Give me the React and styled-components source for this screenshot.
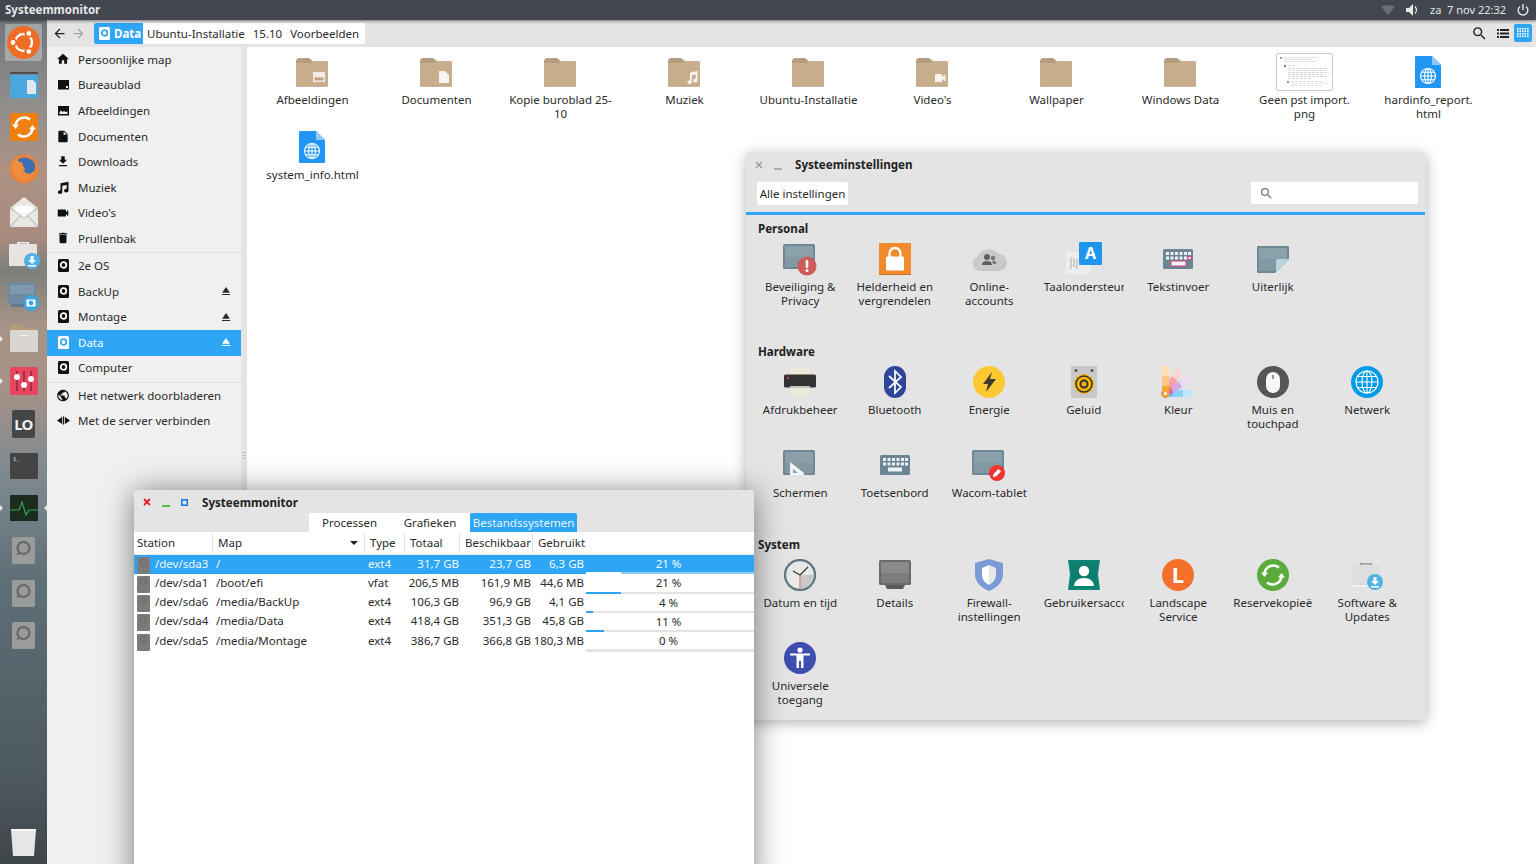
import React from "react";
import styled, { createGlobalStyle } from "styled-components";
import {
  MdHome,
  MdInsertDriveFile,
  MdFileDownload,
  MdVideocam,
  MdDelete,
  MdEject,
  MdPublic,
  MdArrowBack,
  MdArrowForward,
  MdSearch,
} from "react-icons/md";

const GlobalStyle = createGlobalStyle`
  html, body {
    margin: 0;
    padding: 0;
    height: 100%;
    overflow: hidden;
    background: #fff;
  }
  body {
    font-family: "Noto Sans", "Open Sans", sans-serif;
    font-size: 11.5px;
    color: #2a2a2a;
  }
  svg { display: block; }
`;

const Screen = styled.div`
  position: relative;
  width: 1536px;
  height: 864px;
  overflow: hidden;
  display: flex;
  flex-direction: column;
`;

/* top panel */
const TopBar = styled.header`
  height: 20px;
  flex: none;
  box-sizing: border-box;
  background: #41464f;
  color: #e6e6e6;
  display: flex;
  align-items: center;
  padding: 0 5px 1px;
  position: relative;
  z-index: 3;
  box-shadow: 0 1px 3px rgba(0, 0, 0, 0.5);
`;
const AppName = styled.div`
  font-weight: 700;
  font-size: 11.5px;
  flex: 1;
`;
const Tray = styled.div`
  display: flex;
  align-items: center;
`;
const VolumeIcon = styled.svg`
  margin-left: 11px;
`;
const Clock = styled.span`
  font-size: 11px;
  margin: 0 11px 0 10px;
  white-space: pre;
`;
const TrayEnd = styled.span`
  width: 2px;
`;

const Main = styled.div`
  flex: 1;
  display: flex;
  min-height: 0;
`;

/* launcher */
const Launcher = styled.nav`
  width: 47px;
  flex: none;
  padding-top: 1px;
  display: flex;
  flex-direction: column;
  align-items: center;
  background: linear-gradient(
    180deg,
    #72777b 0,
    #8e8d8c 80px,
    #ad9283 150px,
    #a88c80 215px,
    #7e7f7a 250px,
    #a69486 305px,
    #a49287 370px,
    #7f8a90 450px,
    #5f6f78 560px,
    #4c585e 760px,
    #3f4649 844px
  );
`;
const LaunchItem = styled.div`
  position: relative;
  width: 47px;
  height: 42.4px;
  flex: none;
  display: flex;
  align-items: center;
  justify-content: center;
  margin-top: ${(p) => (p.$bottom ? "auto" : "0")};
`;
const LaunchTile = styled.div`
  width: 37px;
  height: 37px;
  display: flex;
  align-items: center;
  justify-content: center;
  border-radius: 2px;
  background: ${(p) => (p.$active ? "rgba(255,255,255,.32)" : "transparent")};
`;
const Pip = styled.i`
  position: absolute;
  top: 18px;
  ${(p) => (p.$right ? "right: 0;" : "left: 0;")}
  width: 0;
  height: 0;
  border-top: 3px solid transparent;
  border-bottom: 3px solid transparent;
  ${(p) =>
    p.$right
      ? "border-right: 3px solid #e8e8e8;"
      : "border-left: 3px solid #e8e8e8;"}
`;

/* file manager */
const Files = styled.div`
  flex: 1;
  display: flex;
  flex-direction: column;
  min-width: 0;
`;
const Toolbar = styled.div`
  height: 27px;
  flex: none;
  box-sizing: border-box;
  background: #e4e4e4;
  display: flex;
  align-items: center;
  padding: 0 4px 1px 3px;
`;
const NavButton = styled.div`
  width: 19px;
  height: 20px;
  display: flex;
  align-items: center;
  justify-content: center;
  color: ${(p) => (p.$off ? "#a5a5a5" : "#222")};
`;
const Crumbs = styled.div`
  margin-left: 6px;
  height: 21px;
  display: flex;
  align-items: center;
  background: #fff;
  border-radius: 2px;
  overflow: hidden;
  padding-right: 2px;
`;
const CrumbActive = styled.div`
  --hole: #2ea5f5;
  height: 100%;
  width: 49px;
  box-sizing: border-box;
  padding-left: 5px;
  display: flex;
  align-items: center;
  gap: 4px;
  background: #2ea5f5;
  color: #fff;
  font-weight: 700;
`;
const Crumb = styled.span`
  padding: 0 4px;
`;
const ToolSpacer = styled.div`
  flex: 1;
`;
const ViewButton = styled.div`
  width: 18px;
  height: 18px;
  display: flex;
  align-items: center;
  justify-content: center;
  border-radius: 2px;
  background: ${(p) => (p.$active ? "#2ea5f5" : "transparent")};
  color: #222;
  margin-left: ${(p) => p.$gap || 0}px;
`;
const FilesBody = styled.div`
  flex: 1;
  display: flex;
  min-height: 0;
`;
const Sidebar = styled.aside`
  width: 194px;
  flex: none;
  background: #f0f0f0;
`;
const SideGroup = styled.div`
  & + & {
    border-top: 1px solid #e2e2e2;
    margin-top: 0.5px;
  }
`;
const SideRow = styled.div`
  --hole: ${(p) => (p.$active ? "#2ea5f5" : "#fff")};
  height: 25.6px;
  box-sizing: border-box;
  display: flex;
  align-items: center;
  padding: 0 8px 1px 9px;
  background: ${(p) => (p.$active ? "#2ea5f5" : "transparent")};
  color: ${(p) => (p.$active ? "#fff" : "#2a2a2a")};
`;
const SideIcon = styled.span`
  width: 14px;
  height: 14px;
  margin-right: 8px;
  display: flex;
  align-items: center;
  justify-content: center;
  color: ${(p) => (p.$active ? "#fff" : "#111")};
`;
const SideLabel = styled.span`
  flex: 1;
`;
const PaneHandle = styled.div`
  width: 6px;
  flex: none;
  background: #e4e4e4;
  display: flex;
  justify-content: center;
`;
const Grip = styled.div`
  width: 4px;
  height: 8px;
  margin-top: 405px;
  background: repeating-linear-gradient(
    180deg,
    #c4c4c4 0,
    #c4c4c4 1px,
    transparent 1px,
    transparent 3px
  );
`;
const FileGrid = styled.main`
  flex: 1;
  background: #fff;
  padding: 7px 0 0 3px;
  display: grid;
  grid-template-columns: repeat(10, 124px);
  grid-auto-rows: 75px;
  align-content: start;
`;
const FileItem = styled.div`
  display: flex;
  flex-direction: column;
  align-items: center;
`;
const FileIconBox = styled.div`
  height: 36px;
  display: flex;
  align-items: center;
  justify-content: center;
  margin-bottom: 3px;
`;
const FileLabel = styled.div`
  width: 106px;
  text-align: center;
  line-height: 14px;
  transform: translateX(0.5px);
`;

/* floating windows */
const Window = styled.section`
  position: absolute;
  display: flex;
  flex-direction: column;
  border-radius: 4px 4px 0 0;
`;
const MonitorWindow = styled(Window)`
  left: 134px;
  top: 490px;
  width: 620px;
  height: 400px;
  background: #fff;
  z-index: 2;
  box-shadow: 0 2px 30px rgba(0, 0, 0, 0.5);
`;
const SettingsWindow = styled(Window)`
  left: 746px;
  top: 152px;
  width: 680px;
  height: 568px;
  background: #e4e4e4;
  z-index: 1;
  box-shadow: 0 3px 14px rgba(0, 0, 0, 0.3);
`;
const TitleBar = styled.div`
  height: ${(p) => p.$h}px;
  flex: none;
  box-sizing: border-box;
  padding-top: ${(p) => p.$top || 0}px;
  display: flex;
  align-items: center;
  background: #e4e4e4;
  border-radius: 4px 4px 0 0;
`;
const WinButtons = styled.div`
  display: flex;
  margin-left: 3px;
`;
const WinButton = styled.span`
  width: 19px;
  height: 10px;
  flex: none;
  display: flex;
  justify-content: center;
  align-items: ${(p) => (p.$low ? "flex-end" : "center")};
`;
const WinTitle = styled.div`
  font-weight: 700;
  font-size: 11.6px;
  color: #222;
  margin-left: ${(p) => p.$gap}px;
`;
const TabRow = styled.div`
  height: 19px;
  flex: none;
  background: #e4e4e4;
  padding-left: 175px;
  display: grid;
  grid-template-columns: 81px 80px 107px;
  justify-content: start;
`;
const Tab = styled.div`
  display: flex;
  align-items: center;
  justify-content: center;
  background: ${(p) => (p.$active ? "#2ea5f5" : "#fff")};
  color: ${(p) => (p.$active ? "#e8f4fd" : "#2a2a2a")};
  border-radius: ${(p) => (p.$active ? "2px 2px 0 0" : "0")};
`;

const columns = "79px 152px 40px 55px 73px 52px 169px";
const TableHead = styled.div`
  display: grid;
  grid-template-columns: ${columns};
  height: 22px;
  flex: none;
  align-items: center;
  border-bottom: 1px solid #e8e8e8;
`;
const HeadCell = styled.div`
  height: 18px;
  display: flex;
  align-items: center;
  justify-content: space-between;
  padding: 0 7px 1px 5px;
  box-sizing: border-box;
  box-shadow: ${(p) => (p.$last ? "none" : "inset -1px 0 0 #e0e0e0")};
  white-space: nowrap;
  &:first-child {
    padding-left: 3px;
  }
`;
const SortArrow = styled.i`
  width: 0;
  height: 0;
  border-left: 4px solid transparent;
  border-right: 4px solid transparent;
  border-top: 4px solid #222;
`;
const TableRow = styled.div`
  display: grid;
  grid-template-columns: ${columns};
  height: 19.25px;
  background: ${(p) => (p.$selected ? "#2ea5f5" : "#fff")};
  color: ${(p) => (p.$selected ? "#f2f9fe" : "#2a2a2a")};
`;
const Cell = styled.div`
  display: flex;
  align-items: center;
  justify-content: ${(p) => (p.$right ? "flex-end" : "flex-start")};
  padding: ${(p) => p.$pad || "0 1px 3px 0"};
  white-space: nowrap;
`;
const DeviceCell = styled.div`
  display: flex;
  align-items: center;
  white-space: nowrap;
`;
const DeviceName = styled.span`
  margin-bottom: 3px;
`;
const DriveBadge = styled.span`
  width: 13px;
  height: 17px;
  flex: none;
  margin: 1px 5px 0 3px;
  background: #7b7b7b;
  border-radius: 1px;
  display: flex;
  justify-content: center;
  padding-top: 2px;
  box-sizing: border-box;
`;
const DriveHole = styled.i`
  width: 7px;
  height: 7px;
  border-radius: 50%;
  border: 1px solid #666;
  box-sizing: border-box;
`;
const UsageCell = styled.div`
  padding: 0 0 0 1px;
  display: flex;
  flex-direction: column;
`;
const UsageText = styled.div`
  flex: 1;
  display: flex;
  align-items: center;
  justify-content: center;
  padding-right: 3px;
`;
const UsageTrack = styled.div`
  height: 3px;
  margin-bottom: -1px;
  background: ${(p) => (p.$selected ? "#8dcbf8" : "#e4e4e4")};
`;
const UsageFill = styled.div`
  height: 100%;
  background: ${(p) => (p.$selected ? "#fff" : "#2ea5f5")};
`;

/* settings */
const SetToolbar = styled.div`
  height: 35px;
  flex: none;
  display: flex;
  justify-content: space-between;
  padding: 5px 8px 0 11px;
  box-sizing: border-box;
`;
const AllButton = styled.div`
  width: 91px;
  height: 23px;
  box-sizing: border-box;
  padding-bottom: 1px;
  background: #fff;
  border-radius: 2px;
  display: flex;
  align-items: center;
  justify-content: center;
`;
const SearchBox = styled.div`
  width: 167px;
  height: 22px;
  background: #fff;
  color: #777;
  display: flex;
  align-items: center;
  padding-left: 8px;
  box-sizing: border-box;
`;
const BlueLine = styled.div`
  height: 3px;
  width: 679px;
  flex: none;
  background: #2ea5f5;
`;
const SetContent = styled.div`
  padding: 7px 0 0 7px;
`;
const SetSection = styled.div`
  margin: ${(p) => p.$gap}px 10px 0 0;
  padding-top: ${(p) => (p.$first ? 0 : 7)}px;
  border-top: ${(p) => (p.$first ? "none" : "1px solid #dedede")};
`;
const SetHeading = styled.div`
  font-weight: 700;
  font-size: 11.6px;
  line-height: 14px;
  margin: 0 0 7px 5px;
  color: #222;
`;
const SetGrid = styled.div`
  display: grid;
  grid-template-columns: repeat(7, 94.5px);
  grid-auto-rows: 83px;
`;
const SetItem = styled.div`
  display: flex;
  flex-direction: column;
  align-items: center;
`;
const SetIcon = styled.div`
  height: 32px;
  display: flex;
  align-items: center;
  justify-content: center;
`;
const SetLabel = styled.div`
  width: 80px;
  margin-top: 5px;
  line-height: 14px;
  text-align: center;
  overflow-x: clip;
`;

/* ---- small icons ---- */
const Globe = ({ cx, cy, r }) => (
  <g fill="none" stroke="#fff" strokeWidth="1.1">
    <circle cx={cx} cy={cy} r={r} />
    <ellipse cx={cx} cy={cy} rx={r * 0.45} ry={r} />
    <path d={`M${cx} ${cy - r}V${cy + r}M${cx - r} ${cy}H${cx + r}`} />
    <path
      d={`M${cx - r * 0.86} ${cy - r * 0.5}H${cx + r * 0.86}M${cx - r * 0.86} ${cy + r * 0.5}H${cx + r * 0.86}`}
    />
  </g>
);

const Folder = ({ kind }) => (
  <svg width="32" height="30" viewBox="0 0 32 30">
    <path d="M1 2.500Q1 1 2.500 1H13L17 4H30.500Q32 4 32 5.500V8H0V3Z" fill="#b39c7f" />
    <path d="M0 6H15L17 4H30.500Q32 4 32 5.500V28Q32 29.500 30.500 29.500H1.500Q0 29.500 0 28Z" fill="#c9ae8c" />
    <rect y="28.500" width="32" height="1" fill="#b39c7f" />
    {kind === "img" && (
      <g>
        <rect x="17" y="15" width="12" height="10" fill="#f2ede6" />
        <path d="M18.500 23.500V21L20 19.500L21.500 21L23 20L24.500 21L25.500 20L27.500 21V23.500Z" fill="#bda488" />
      </g>
    )}
    {kind === "doc" && <path d="M19 14H25L29 18V26H19Z" fill="#f7f3ee" />}
    {kind === "music" && (
      <path
        d="M22 15.500L29.500 14V23.500A2.200 1.900 0 1 1 27.800 21.700V17.500L23.800 18.300V25A2.200 1.900 0 1 1 22 23.200Z"
        fill="#f7f3ee"
      />
    )}
    {kind === "video" && (
      <path d="M19 17H26V20L29.500 17.500V24.500L26 22V25H19Z" fill="#f7f3ee" />
    )}
  </svg>
);

const HtmlFile = () => (
  <svg width="26" height="32" viewBox="0 0 26 32">
    <path d="M1 0H17L26 9V31Q26 32 25 32H1Q0 32 0 31V1Q0 0 1 0Z" fill="#2196f3" />
    <path d="M17 0L26 9H17Z" fill="#90caf9" />
    <Globe cx={13} cy={20} r={7.5} />
  </svg>
);

const Thumb = () => (
  <svg width="57" height="38" viewBox="0 0 57 38">
    <rect x="0.500" y="0.500" width="56" height="37" rx="1" fill="#fff" stroke="#c9c9c9" />
    <rect x="4" y="4" width="2" height="2" fill="#8f9db0" />
    <path d="M8 4.500H42M8 6.500H36M8 8.500H40" stroke="#e2e2e2" />
    <rect x="8" y="12" width="2" height="2" fill="#5f84b8" />
    <path d="M12 12.500H20M12 15.500H52M12 17.500H50M12 19.500H53M12 21.500H49M12 23.500H51M12 25.500H36" stroke="#d8d8d8" strokeDasharray="3 1" />
    <rect x="11" y="28" width="2" height="2" fill="#7a9fca" />
    <path d="M15 28.500H48M15 30.500H52M15 32.500H46" stroke="#e0e0e0" strokeDasharray="3 1" />
  </svg>
);

const DriveIcon = () => (
  <svg width="11" height="13" viewBox="0 0 11 13">
    <rect width="11" height="13" rx="1.500" fill="currentColor" />
    <circle cx="5.500" cy="6" r="2.800" fill="none" stroke="var(--hole, #fff)" strokeWidth="1.800" />
  </svg>
);

const BlockIcon = ({ kind }) => (
  <svg width="13" height="13" viewBox="0 0 13 13" fill="currentColor">
    {kind === "desk" && (
      <g>
        <path d="M1 2H12V11.500H1Z" />
        <rect x="9" y="8" width="2" height="2" fill="#f0f0f0" />
      </g>
    )}
    {kind === "pics" && (
      <g>
        <path d="M1 2H12V11.500H1Z" />
        <path d="M2.500 10V8L4 6.500L5.500 8L7 7L8.500 8L10.500 7.500V10Z" fill="#f0f0f0" />
      </g>
    )}
    {kind === "music" && (
      <path d="M3.500 2.200L11.500 0.800V9.500A2.200 1.900 0 1 1 9.700 7.700V4L5.300 4.800V11A2.200 1.900 0 1 1 3.500 9.200Z" />
    )}
    {kind === "server" && (
      <path d="M0 6.500L5 3V10ZM5.800 2.500H7.200V10.500H5.800ZM8 3L13 6.500L8 10Z" />
    )}
  </svg>
);

/* ---- launcher icons ---- */
const UbuntuLogo = ({ size = 33 }) => (
  <svg width={size} height={size} viewBox="0 0 33 33">
    <circle cx="16.500" cy="16.500" r="16.500" fill="#ef6c24" />
    <circle cx="16.500" cy="16.500" r="8.500" fill="none" stroke="#fff" strokeWidth="2.400" />
    <g stroke="#ef6c24" strokeWidth="2">
      <circle cx="6" cy="16.500" r="3.400" fill="#fff" />
      <circle cx="21.800" cy="7.400" r="3.400" fill="#fff" />
      <circle cx="21.800" cy="25.600" r="3.400" fill="#fff" />
    </g>
  </svg>
);
const SyncArrows = ({ x = 0, y = 0, color = "#fff" }) => (
  <g transform={`translate(${x} ${y})`} fill="none" stroke={color} strokeWidth="2.600">
    <path d="M5.500 12A9 9 0 0 1 20 6.500" />
    <path d="M22.500 16A9 9 0 0 1 8 21.500" />
    <path d="M2 11.500H9L5.500 16Z" fill={color} stroke="none" />
    <path d="M26 16.500H19L22.500 12Z" fill={color} stroke="none" />
  </g>
);
const FilesApp = () => (
  <svg width="28" height="26" viewBox="0 0 28 26">
    <rect width="28" height="2" y="0" fill="#4a4f57" />
    <rect y="3" width="28" height="23" rx="1" fill="#4aa8de" />
    <path d="M17 8H23L26 11V22H17Z" fill="#dfe8ee" />
  </svg>
);
const UpdatesApp = () => (
  <svg width="28" height="28" viewBox="0 0 28 28">
    <rect width="28" height="28" rx="1" fill="#f07f12" />
    <SyncArrows />
  </svg>
);
const Firefox = () => (
  <svg width="30" height="30" viewBox="0 0 30 30">
    <circle cx="15" cy="15" r="14.500" fill="#e9833a" />
    <path d="M8 6Q15 1 23 6Q28 11 25 17Q22 21 18 19Q14 18 16 14Q13 12 14 9Q11 9 8 6Z" fill="#3b6fb5" />
    <path d="M3 13Q4 6 9 3Q7 8 12 9Q12 12 15 13Q12 15 14 19Q19 23 25 17Q23 25 15 26Q5 25 3 13Z" fill="#ee8f3c" />
  </svg>
);
const MailApp = () => (
  <svg width="28" height="30" viewBox="0 0 28 30">
    <path d="M0 11L14 0L28 11V30H0Z" fill="#e9e7e4" />
    <path d="M5 9H23V16L14 21L5 16Z" fill="#fff" />
    <path d="M0 11L14 21L28 11M0 30L11 18M28 30L17 18" stroke="#a9a9a9" fill="none" />
  </svg>
);
const SoftwareApp = ({ dim }) => (
  <svg width="32" height="30" viewBox="0 0 32 30">
    <path d="M9 3H21V6H19V4.500H11V6H9Z" fill={dim ? "#9a9a9a" : "#eee"} />
    <rect x="1" y="5" width="28" height="22" rx="1" fill={dim ? "#dedede" : "#e6e3e0"} />
    {dim && <rect x="1" y="25" width="28" height="2" fill="#f0f0f0" />}
    <circle cx="24" cy="22" r="8" fill="#4fb1e4" />
    <path d="M22.500 17H25.500V21H28L24 25L20 21H22.500ZM20 26H28V27.500H20Z" fill="#fff" />
  </svg>
);
const ShotApp = () => (
  <svg width="32" height="30" viewBox="0 0 32 30">
    <rect x="0" y="0" width="28" height="22" rx="1" fill="#6d8aa0" />
    <rect x="2" y="3" width="24" height="9" fill="#7f9aae" />
    <rect x="3" y="22" width="22" height="3" fill="#5f7a8e" />
    <circle cx="23" cy="21" r="8" fill="#3ea6dc" />
    <rect x="18.500" y="17.500" width="9" height="7" fill="#fff" />
    <circle cx="23" cy="21" r="2.400" fill="#3ea6dc" />
  </svg>
);
const FolderApp = () => (
  <svg width="28" height="27" viewBox="0 0 28 27">
    <path d="M1 0H12L15 3H25V8H1Z" fill="#b49c7a" />
    <rect y="5" width="28" height="22" rx="1" fill="#d9d6d1" />
    <rect x="10" y="10" width="8" height="1" fill="#f5f5f5" />
  </svg>
);
const MixerApp = () => (
  <svg width="28" height="28" viewBox="0 0 28 28">
    <rect width="28" height="28" rx="2" fill="#e8455e" />
    <path d="M7 4V24M14 4V24M21 4V24" stroke="#a82c44" strokeWidth="2" />
    <circle cx="7" cy="10" r="3" fill="#fff" />
    <circle cx="14" cy="18" r="3" fill="#fff" />
    <circle cx="21" cy="12" r="3" fill="#fff" />
  </svg>
);
const OfficeTile = styled.div`
  width: 23px;
  height: 28px;
  background: #454545;
  border-radius: 2px;
  color: #f0f0f0;
  font: 700 15px "Noto Sans", sans-serif;
  display: flex;
  align-items: center;
  justify-content: center;
  letter-spacing: -0.8px;
`;
const TerminalApp = () => (
  <svg width="28" height="26" viewBox="0 0 28 26">
    <rect width="28" height="26" rx="1" fill="#444" />
    <text x="3" y="8" fontSize="6" fill="#bbb" fontFamily="Noto Sans, sans-serif">$_</text>
  </svg>
);
const MonitorApp = () => (
  <svg width="28" height="26" viewBox="0 0 28 26">
    <rect width="28" height="26" rx="1" fill="#1b2b1d" />
    <path d="M0 15H9L12 7L16 20L19 15H28" fill="none" stroke="#37a24a" strokeWidth="1.200" />
  </svg>
);
const DiskApp = () => (
  <svg width="23" height="27" viewBox="0 0 23 27">
    <rect width="23" height="27" rx="2" fill="#9a9c9c" />
    <circle cx="11.500" cy="11" r="6" fill="none" stroke="#686b6c" strokeWidth="2.400" />
    <path d="M6 15L4 18L9 17Z" fill="#686b6c" />
  </svg>
);
const TrashApp = () => (
  <svg width="26" height="29" viewBox="0 0 26 29">
    <path d="M0 1H25L23 28H2Z" fill="#e6e6e4" />
    <path d="M0 1H25L24.800 3H0.200Z" fill="#f8f8f8" />
  </svg>
);

/* ---- settings icons ---- */
const Tablet = ({ children, fill = "#6f8894", inner = "#8aa0aa" }) => (
  <svg width="36" height="34" viewBox="0 0 36 34">
    <rect x="1" y="2" width="32" height="25" rx="1.500" fill={fill} />
    <rect x="3" y="4" width="28" height="21" fill={inner} />
    <rect x="3" y="15" width="28" height="10" fill={fill} opacity="0.28" />
    {children}
  </svg>
);
const Keyboard = ({ pink }) => (
  <svg width="30" height="22" viewBox="0 0 30 22">
    <rect width="30" height="20" y="1" rx="1.500" fill="#6b8593" />
    <g fill="#eef2f4">
      {[3, 7.5, 12, 16.5, 21, 25].map((x) => (
        <React.Fragment key={x}>
          <rect x={x} y="4" width="3" height="3" />
          <rect x={x} y="8.500" width="3" height="3" />
        </React.Fragment>
      ))}
      {pink ? (
        <rect x="8" y="13" width="15" height="5" stroke="#d9447f" strokeWidth="1" />
      ) : (
        <rect x="8" y="13.500" width="14" height="4" />
      )}
    </g>
    {pink && <rect x="25" y="8.500" width="3" height="3" fill="#fff" stroke="#d9447f" />}
  </svg>
);
const Round = ({ fill, children }) => (
  <svg width="32" height="32" viewBox="0 0 32 32">
    <circle cx="16" cy="16" r="16" fill={fill} />
    {children}
  </svg>
);
const FanStrip = ({ rot, shades }) => (
  <g transform={`rotate(${rot} 4.500 27.500)`}>
    <rect x="1" y="0" width="7" height="10" fill={shades[2]} />
    <rect x="1" y="10" width="7" height="10" fill={shades[1]} />
    <rect x="1" y="20" width="7" height="11" rx="1" fill={shades[0]} />
  </g>
);

const settingIcons = {
  security: (
    <Tablet>
      <circle cx="25" cy="24" r="9.500" fill="#cd5c58" />
      <rect x="23.700" y="18" width="2.600" height="8" rx="1" fill="#fff" />
      <circle cx="25" cy="28.500" r="1.500" fill="#fff" />
    </Tablet>
  ),
  lock: (
    <svg width="32" height="32" viewBox="0 0 32 32">
      <rect width="32" height="32" fill="#ef8b2c" />
      <rect y="31" width="32" height="1" fill="#c96f1e" />
      <path d="M10.500 14V10.500A5.500 5.500 0 0 1 21.500 10.500V14" fill="none" stroke="#fff" strokeWidth="2.400" />
      <rect x="7" y="13.500" width="18" height="14" rx="1" fill="#fff" />
    </svg>
  ),
  online: (
    <svg width="36" height="26" viewBox="0 0 36 26">
      <path d="M8 25A7.500 7.500 0 0 1 7 10.500A11 10 0 0 1 27 8A8.500 8.500 0 0 1 28 25Z" fill="#c9c9c9" />
      <circle cx="16" cy="11" r="3" fill="#5f5f5f" />
      <path d="M11 19Q11 15 16 15Q21 15 21 19Z" fill="#5f5f5f" />
      <circle cx="22" cy="12" r="2.200" fill="#777" />
      <path d="M21 15Q25 14 25.500 18H22Z" fill="#777" />
    </svg>
  ),
  language: (
    <svg width="36" height="34" viewBox="0 0 36 34">
      <rect x="0" y="10" width="24" height="22" fill="#eeeeee" />
      <path d="M5 15V27M8 16V25M11 17V27" stroke="#c2c2c2" strokeWidth="1.500" />
      <rect x="13" y="0" width="23" height="23" rx="1" fill="#1e96f0" />
      <text x="24.500" y="17" textAnchor="middle" fontSize="16" fontWeight="700" fill="#fff" fontFamily="Noto Sans, sans-serif">A</text>
    </svg>
  ),
  input: <Keyboard pink />,
  look: (
    <svg width="32" height="27" viewBox="0 0 32 27">
      <path d="M1 0H31Q32 0 32 1V13L18 27H1Q0 27 0 26V1Q0 0 1 0Z" fill="#6f8894" />
      <path d="M2 2H30V12.500L17.500 25H2Z" fill="#8aa0aa" />
      <path d="M2 13H30L17.500 25H2Z" fill="#6f8894" opacity="0.3" />
      <path d="M32 13L19 26V15Q19 13 21 13Z" fill="#b5d3e0" />
    </svg>
  ),
  printer: (
    <svg width="32" height="32" viewBox="0 0 32 32">
      <rect x="6" y="1" width="20" height="10" fill="#eeeadb" />
      <rect y="8.500" width="32" height="13" rx="1.500" fill="#333" />
      <rect x="3" y="11" width="2" height="2" fill="#d33" />
      <rect x="6" y="20" width="20" height="11" fill="#eeeadb" />
      <rect x="6" y="20" width="20" height="2" fill="#c9c6ba" />
    </svg>
  ),
  bluetooth: (
    <svg width="22" height="32" viewBox="0 0 22 32">
      <rect width="22" height="32" rx="11" fill="#2f4599" />
      <path d="M5 10L17 21L11 27V5L17 11L5 22" fill="none" stroke="#fff" strokeWidth="1.700" />
    </svg>
  ),
  energy: (
    <Round fill="#fcc934">
      <path d="M19 6L10 18H15L13 26L23 13H17Z" fill="#3d3a32" />
    </Round>
  ),
  sound: (
    <svg width="26" height="32" viewBox="0 0 26 32">
      <rect width="26" height="32" fill="#c8c8c8" />
      <circle cx="5" cy="4.500" r="1.500" fill="#555" />
      <circle cx="21" cy="4.500" r="1.500" fill="#555" />
      <circle cx="13" cy="18" r="10" fill="#f4b400" />
      <circle cx="13" cy="18" r="8" fill="none" stroke="#333" strokeWidth="1.500" />
      <circle cx="13" cy="18" r="4.500" fill="#333" />
      <circle cx="13" cy="18" r="2.500" fill="#f4b400" />
    </svg>
  ),
  color: (
    <svg width="34" height="32" viewBox="0 0 34 32">
      <FanStrip rot={90} shades={["#6cc0f5", "#8fd0f8", "#c4e6fb"]} />
      <FanStrip rot={58} shades={["#b877d0", "#d3a8e4", "#ecdcf3"]} />
      <FanStrip rot={30} shades={["#e8707a", "#f3a3a8", "#fbd3d3"]} />
      <FanStrip rot={0} shades={["#f9a332", "#fcc680", "#fddfb5"]} />
      <circle cx="4.500" cy="27.500" r="1.500" fill="#fff" />
    </svg>
  ),
  mouse: (
    <Round fill="#565656">
      <rect x="9" y="6" width="14" height="21" rx="7" fill="#f7f7f7" />
      <rect x="15.400" y="9" width="1.200" height="4" fill="#555" />
    </Round>
  ),
  network: (
    <Round fill="#039be5">
      <Globe cx={16} cy={16} r={11} />
    </Round>
  ),
  screens: (
    <Tablet>
      <path d="M8 14L22 25V27H8Z" fill="#eef3f5" />
      <path d="M11 21L16 25H11Z" fill="#8aa0aa" />
    </Tablet>
  ),
  keyboard: <Keyboard />,
  wacom: (
    <Tablet>
      <circle cx="26" cy="25" r="8" fill="#ee3434" />
      <path d="M22 29L22.500 26L27.500 21L30 23.500L25 28.500Z" fill="#fff" />
    </Tablet>
  ),
  clock: (
    <svg width="32" height="32" viewBox="0 0 32 32">
      <circle cx="16" cy="16" r="15" fill="#e9e9e6" stroke="#647a84" strokeWidth="2.400" />
      <path d="M16 16L29.500 16A13.500 13.500 0 0 1 16 29.500Z" fill="#c8c8c8" />
      <path d="M16 16V30" stroke="#e37e74" strokeWidth="1.200" />
      <path d="M16 16L24 8M16 16L9 12" stroke="#333" strokeWidth="1.200" />
    </svg>
  ),
  details: (
    <svg width="32" height="30" viewBox="0 0 32 30">
      <rect width="32" height="25" rx="1.500" fill="#6a6a6a" />
      <rect x="2" y="2" width="28" height="21" fill="#8a8a8a" />
      <rect x="2" y="13" width="28" height="10" fill="#7c7c7c" />
      <path d="M6 25H26L24 29H8Z" fill="#5b5b5b" />
    </svg>
  ),
  firewall: (
    <svg width="28" height="32" viewBox="0 0 28 32">
      <path d="M14 0L28 4V15Q28 26 14 32Q0 26 0 15V4Z" fill="#7b9ad8" />
      <path d="M14 6L21 9V16Q21 22 14 26Z" fill="#e7e7e7" />
      <path d="M14 6L7 9V16Q7 22 14 26Z" fill="#ffffff" />
    </svg>
  ),
  users: (
    <svg width="34" height="32" viewBox="0 0 34 32">
      <path d="M1 1H33L31 15L33 31H1L3 15Z" fill="#0c8575" />
      <path d="M3 3H31L29.500 15L31 29H3L4.500 15Z" fill="#0f6f63" opacity="0.25" />
      <circle cx="17" cy="12" r="5.200" fill="#fff" />
      <path d="M7 27Q8 19 17 19Q26 19 27 27Z" fill="#fff" />
    </svg>
  ),
  landscape: (
    <Round fill="#f4702b">
      <text x="16" y="24" textAnchor="middle" fontSize="22" fontWeight="700" fill="#fff" fontFamily="Noto Sans, sans-serif">L</text>
    </Round>
  ),
  backup: (
    <Round fill="#5aaa3c">
      <SyncArrows x={2} y={2} />
    </Round>
  ),
  software: <SoftwareApp dim />,
  access: (
    <Round fill="#3d4db0">
      <circle cx="16" cy="8" r="2.600" fill="#fff" />
      <path d="M6 11.500H26V13.500H19.500V26H17V19H15V26H12.500V13.500H6Z" fill="#fff" />
    </Round>
  ),
};

const places = [
  { label: "Persoonlijke map", icon: <MdHome size={16} /> },
  { label: "Bureaublad", icon: <BlockIcon kind="desk" /> },
  { label: "Afbeeldingen", icon: <BlockIcon kind="pics" /> },
  { label: "Documenten", icon: <MdInsertDriveFile size={15} /> },
  { label: "Downloads", icon: <MdFileDownload size={17} /> },
  { label: "Muziek", icon: <BlockIcon kind="music" /> },
  { label: "Video's", icon: <MdVideocam size={16} /> },
  { label: "Prullenbak", icon: <MdDelete size={16} /> },
];
const drives = [
  { label: "2e OS" },
  { label: "BackUp", eject: true },
  { label: "Montage", eject: true },
  { label: "Data", eject: true, active: true },
  { label: "Computer" },
];
const network = [
  { label: "Het netwerk doorbladeren", icon: <MdPublic size={15} /> },
  { label: "Met de server verbinden", icon: <BlockIcon kind="server" /> },
];

const fileList = [
  { label: "Afbeeldingen", icon: <Folder kind="img" /> },
  { label: "Documenten", icon: <Folder kind="doc" /> },
  { label: "Kopie buroblad 25-10", icon: <Folder /> },
  { label: "Muziek", icon: <Folder kind="music" /> },
  { label: "Ubuntu-Installatie", icon: <Folder /> },
  { label: "Video's", icon: <Folder kind="video" /> },
  { label: "Wallpaper", icon: <Folder /> },
  { label: "Windows Data", icon: <Folder /> },
  { label: "Geen pst import.\u200bpng", icon: <Thumb /> },
  { label: "hardinfo_report.\u200bhtml", icon: <HtmlFile /> },
  { label: "system_info.html", icon: <HtmlFile /> },
];

const launcherApps = [
  { el: <UbuntuLogo />, active: true },
  { el: <FilesApp /> },
  { el: <UpdatesApp /> },
  { el: <Firefox /> },
  { el: <MailApp /> },
  { el: <SoftwareApp /> },
  { el: <ShotApp /> },
  { el: <FolderApp />, pip: true },
  { el: <MixerApp />, pip: true },
  { el: <OfficeTile>LO</OfficeTile> },
  { el: <TerminalApp /> },
  { el: <MonitorApp />, pip: true, pipRight: true },
  { el: <DiskApp /> },
  { el: <DiskApp /> },
  { el: <DiskApp /> },
];

const tableColumns = ["Station", "Map", "Type", "Totaal", "Beschikbaar", "Gebruikt", ""];
const disks = [
  ["/dev/sda3", "/", "ext4", "31,7 GB", "23,7 GB", "6,3 GB", 21],
  ["/dev/sda1", "/boot/efi", "vfat", "206,5 MB", "161,9 MB", "44,6 MB", 21],
  ["/dev/sda6", "/media/BackUp", "ext4", "106,3 GB", "96,9 GB", "4,1 GB", 4],
  ["/dev/sda4", "/media/Data", "ext4", "418,4 GB", "351,3 GB", "45,8 GB", 11],
  ["/dev/sda5", "/media/Montage", "ext4", "386,7 GB", "366,8 GB", "180,3 MB", 0],
];

const sections = [
  {
    title: "Personal",
    first: true,
    gap: 0,
    items: [
      ["Beveiliging & Privacy", "security"],
      ["Helderheid en vergrendelen", "lock"],
      ["Online-accounts", "online"],
      ["Taalondersteuning", "language"],
      ["Tekstinvoer", "input"],
      ["Uiterlijk", "look"],
    ],
  },
  {
    title: "Hardware",
    gap: 11,
    items: [
      ["Afdrukbeheer", "printer"],
      ["Bluetooth", "bluetooth"],
      ["Energie", "energy"],
      ["Geluid", "sound"],
      ["Kleur", "color"],
      ["Muis en touchpad", "mouse"],
      ["Netwerk", "network"],
      ["Schermen", "screens"],
      ["Toetsenbord", "keyboard"],
      ["Wacom-tablet", "wacom"],
    ],
  },
  {
    title: "System",
    gap: -2,
    items: [
      ["Datum en tijd", "clock"],
      ["Details", "details"],
      ["Firewall-instellingen", "firewall"],
      ["Gebruikersaccounts", "users"],
      ["Landscape Service", "landscape"],
      ["Reservekopieë", "backup"],
      ["Software & Updates", "software"],
      ["Universele toegang", "access"],
    ],
  },
];

function SidebarRow({ item }) {
  return (
    <SideRow $active={item.active}>
      <SideIcon $active={item.active}>{item.icon || <DriveIcon />}</SideIcon>
      <SideLabel>{item.label}</SideLabel>
      {item.eject && <MdEject size={14} />}
    </SideRow>
  );
}

function DiskRow({ disk, selected }) {
  const [device, map, type, total, free, used, pct] = disk;
  return (
    <TableRow $selected={selected}>
      <DeviceCell>
        <DriveBadge>
          <DriveHole />
        </DriveBadge>
        <DeviceName>{device}</DeviceName>
      </DeviceCell>
      <Cell $pad="0 0 3px 3px">{map}</Cell>
      <Cell $pad="0 0 3px 3px">{type}</Cell>
      <Cell $right>{total}</Cell>
      <Cell $right $pad="0 2px 3px 0">{free}</Cell>
      <Cell $right>{used}</Cell>
      <UsageCell>
        <UsageText>{pct} %</UsageText>
        <UsageTrack $selected={selected}>
          <UsageFill $selected={selected} style={{ width: `${pct}%` }} />
        </UsageTrack>
      </UsageCell>
    </TableRow>
  );
}

export default function App() {
  return (
    <Screen>
      <GlobalStyle />
      <TopBar>
        <AppName>Systeemmonitor</AppName>
        <Tray>
          <svg width="14" height="10" viewBox="0 0 14 10">
            <path d="M0 1.500Q7 -1.500 14 1.500L7 10Z" fill="#6b7078" />
          </svg>
          <VolumeIcon width="14" height="12" viewBox="0 0 14 12">
            <path d="M0 4H3L7 0V12L3 8H0Z" fill="#e6e6e6" />
            <path d="M9 2.500Q12 6 9 9.500" fill="none" stroke="#e6e6e6" strokeWidth="1.200" />
          </VolumeIcon>
          <Clock>za  7 nov 22:32</Clock>
          <svg width="12" height="12" viewBox="0 0 12 12" fill="none" stroke="#e6e6e6" strokeWidth="1.400">
            <path d="M3 2.500A4.800 4.800 0 1 0 9 2.500M6 0V6" />
          </svg>
          <TrayEnd />
        </Tray>
      </TopBar>
      <Main>
        <Launcher>
          {launcherApps.map((app, i) => (
            <LaunchItem key={i}>
              {app.pip && <Pip />}
              {app.pipRight && <Pip $right />}
              <LaunchTile $active={app.active}>{app.el}</LaunchTile>
            </LaunchItem>
          ))}
          <LaunchItem $bottom>
            <TrashApp />
          </LaunchItem>
        </Launcher>
        <Files>
          <Toolbar>
            <NavButton>
              <MdArrowBack size={15} />
            </NavButton>
            <NavButton $off>
              <MdArrowForward size={15} />
            </NavButton>
            <Crumbs>
              <CrumbActive>
                <DriveIcon />
                Data
              </CrumbActive>
              <Crumb>Ubuntu-Installatie</Crumb>
              <Crumb>15.10</Crumb>
              <Crumb>Voorbeelden</Crumb>
            </Crumbs>
            <ToolSpacer />
            <ViewButton>
              <MdSearch size={17} />
            </ViewButton>
            <ViewButton $gap={6}>
              <svg width="12" height="9" viewBox="0 0 12 9" fill="#222">
                <path d="M0 0H2V2H0ZM3 0H12V2H3ZM0 3.500H2V5.500H0ZM3 3.500H12V5.500H3ZM0 7H2V9H0ZM3 7H12V9H3Z" />
              </svg>
            </ViewButton>
            <ViewButton $active $gap={2}>
              <svg width="12" height="10" viewBox="0 0 12 10" fill="#fff">
                {[0, 2.5, 5, 7.5, 10].map((x) =>
                  [0, 2.5, 5, 7.5].map((y) => (
                    <rect key={`${x}-${y}`} x={x} y={y} width="1.600" height="1.600" />
                  ))
                )}
              </svg>
            </ViewButton>
          </Toolbar>
          <FilesBody>
            <Sidebar>
              <SideGroup>
                {places.map((item) => (
                  <SidebarRow key={item.label} item={item} />
                ))}
              </SideGroup>
              <SideGroup>
                {drives.map((item) => (
                  <SidebarRow key={item.label} item={item} />
                ))}
              </SideGroup>
              <SideGroup>
                {network.map((item) => (
                  <SidebarRow key={item.label} item={item} />
                ))}
              </SideGroup>
            </Sidebar>
            <PaneHandle>
              <Grip />
            </PaneHandle>
            <FileGrid>
              {fileList.map((file) => (
                <FileItem key={file.label}>
                  <FileIconBox>{file.icon}</FileIconBox>
                  <FileLabel>{file.label}</FileLabel>
                </FileItem>
              ))}
            </FileGrid>
          </FilesBody>
        </Files>
      </Main>

      <SettingsWindow>
        <TitleBar $h={25}>
          <WinButtons>
            <WinButton>
              <svg width="8" height="8" viewBox="0 0 8 8" stroke="#999" strokeWidth="1.400">
                <path d="M1 1L7 7M7 1L1 7" />
              </svg>
            </WinButton>
            <WinButton $low>
              <svg width="8" height="2" viewBox="0 0 8 2" stroke="#999" strokeWidth="1.400">
                <path d="M0 1H8" />
              </svg>
            </WinButton>
          </WinButtons>
          <WinTitle $gap={8}>Systeeminstellingen</WinTitle>
        </TitleBar>
        <SetToolbar>
          <AllButton>Alle instellingen</AllButton>
          <SearchBox>
            <MdSearch size={15} />
          </SearchBox>
        </SetToolbar>
        <BlueLine />
        <SetContent>
          {sections.map((section) => (
            <SetSection key={section.title} $first={section.first} $gap={section.gap}>
              <SetHeading>{section.title}</SetHeading>
              <SetGrid>
                {section.items.map(([label, icon]) => (
                  <SetItem key={label}>
                    <SetIcon>{settingIcons[icon]}</SetIcon>
                    <SetLabel>{label}</SetLabel>
                  </SetItem>
                ))}
              </SetGrid>
            </SetSection>
          ))}
        </SetContent>
      </SettingsWindow>

      <MonitorWindow>
        <TitleBar $h={23} $top={1}>
          <WinButtons>
            <WinButton>
              <svg width="8" height="8" viewBox="0 0 8 8" stroke="#e02020" strokeWidth="1.800">
                <path d="M1 1L7 7M7 1L1 7" />
              </svg>
            </WinButton>
            <WinButton $low>
              <svg width="8" height="2" viewBox="0 0 8 2" stroke="#22b422" strokeWidth="1.600">
                <path d="M0 1H8" />
              </svg>
            </WinButton>
            <WinButton>
              <svg width="7" height="7" viewBox="0 0 7 7" fill="none" stroke="#1e7be0" strokeWidth="1.600">
                <rect x="0.800" y="0.800" width="5.400" height="5.400" />
              </svg>
            </WinButton>
          </WinButtons>
          <WinTitle $gap={8}>Systeemmonitor</WinTitle>
        </TitleBar>
        <TabRow>
          <Tab>Processen</Tab>
          <Tab>Grafieken</Tab>
          <Tab $active>Bestandssystemen</Tab>
        </TabRow>
        <TableHead>
          {tableColumns.map((col, i) => (
            <HeadCell key={i} $last={i >= 5}>
              {col}
              {col === "Map" && <SortArrow />}
            </HeadCell>
          ))}
        </TableHead>
        {disks.map((disk, i) => (
          <DiskRow key={disk[0]} disk={disk} selected={i === 0} />
        ))}
      </MonitorWindow>
    </Screen>
  );
}
